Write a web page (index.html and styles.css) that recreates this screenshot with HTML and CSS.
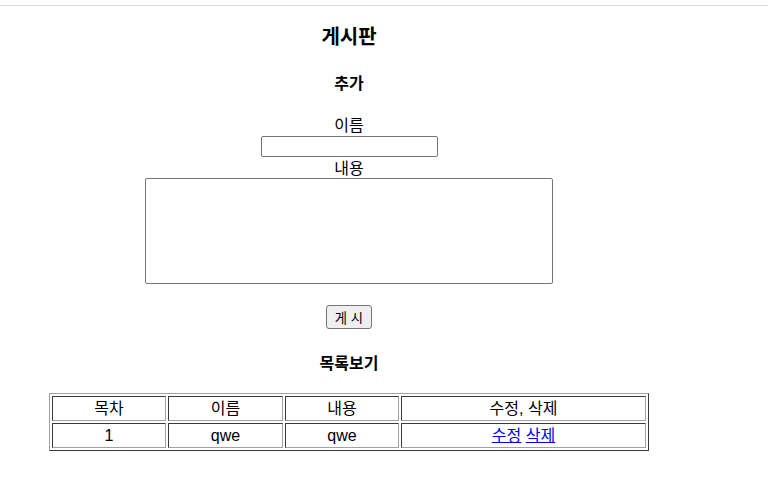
FILE: index.html
```html
<!DOCTYPE html>
<html lang="ko">
<head>
<meta charset="utf-8">
<title>게시판</title>
<link rel="stylesheet" href="styles.css">
</head>
<body>
<div class="topbar"></div>
<main class="wrap">
  <h1 class="title">게시판</h1>
  <h2 class="section">추가</h2>
  <form class="form">
    <label class="label" for="name">이름</label>
    <input class="name-input" id="name" type="text">
    <label class="label" for="content">내용</label>
    <textarea class="content-input" id="content"></textarea>
    <button class="submit" type="button">게 시</button>
  </form>
  <h2 class="section list-title">목록보기</h2>
  <table class="board">
    <colgroup>
      <col class="c1"><col class="c2"><col class="c3"><col class="c4">
    </colgroup>
    <tr>
      <td>목차</td><td>이름</td><td>내용</td><td>수정, 삭제</td>
    </tr>
    <tr>
      <td>1</td><td>qwe</td><td>qwe</td><td><a href="#">수정</a> <a href="#">삭제</a></td>
    </tr>
  </table>
</main>
</body>
</html>
```
FILE: styles.css
```css
html, body {
  margin: 0;
  padding: 0;
  background: #ffffff;
}
body {
  font-family: "Liberation Sans", "Noto Sans CJK KR", sans-serif;
  font-size: 16px;
  color: #000;
}
.topbar {
  height: 5px;
  border-bottom: 1px solid #dcdcdc;
}
.wrap {
  width: 698px;
  text-align: center;
}
.title {
  margin: 15px 0 0;
  font-size: 20px;
  line-height: 30px;
  font-weight: bold;
  font-family: "Noto Sans CJK KR", sans-serif;
}
.section {
  margin: 20px 0 0;
  font-size: 16px;
  line-height: 22px;
  font-weight: bold;
  font-family: "Noto Sans CJK KR", sans-serif;
}
.form {
  margin: 20px 0 0;
  display: flex;
  flex-direction: column;
  align-items: center;
}
.label {
  display: block;
  font-family: "Noto Sans CJK KR", sans-serif;
  line-height: 22px;
  height: 22px;
}
.name-input {
  box-sizing: border-box;
  width: 177px;
  height: 21px;
  margin: 1px 0 0;
  border: 1px solid #767676;
  border-radius: 2px;
  padding: 1px 2px;
}
.label + .content-input { margin-top: 0; }
.form .name-input + .label { height: 21px; line-height: 21px; }
.content-input {
  box-sizing: border-box;
  width: 408px;
  height: 106px;
  border: 1px solid #767676;
  border-radius: 2px;
  resize: none;
  display: block;
  margin: 0;
}
.submit {
  box-sizing: border-box;
  width: 46px;
  height: 24px;
  margin-top: 21px;
  padding: 0;
  font-family: "Noto Sans CJK KR", sans-serif;
  font-size: 13.33px;
  background: #efefef;
  border: 1px solid #767676;
  border-radius: 3px;
  color: #000;
}
.list-title {
  margin-top: 22px;
}
.board {
  margin: 20px 0 0 49px;
  width: 600px;
  table-layout: fixed;
  border-collapse: separate;
  border-spacing: 2px;
  border: 1px solid;
  border-color: #a0a0a0 #3a3a3a #3a3a3a #a0a0a0;
}
.c1 { width: 114px; }
.c2 { width: 115px; }
.c3 { width: 114px; }
.c4 { width: 245px; }
.board td {
  box-sizing: border-box;
  height: 25px;
  padding: 1px;
  line-height: 21px;
  text-align: center;
  border: 1px solid;
  border-color: #3a3a3a #a0a0a0 #a0a0a0 #3a3a3a;
  font-family: "Liberation Sans", "Noto Sans CJK KR", sans-serif;
}
.board a {
  color: #0000ee;
  text-decoration: underline;
}
```
